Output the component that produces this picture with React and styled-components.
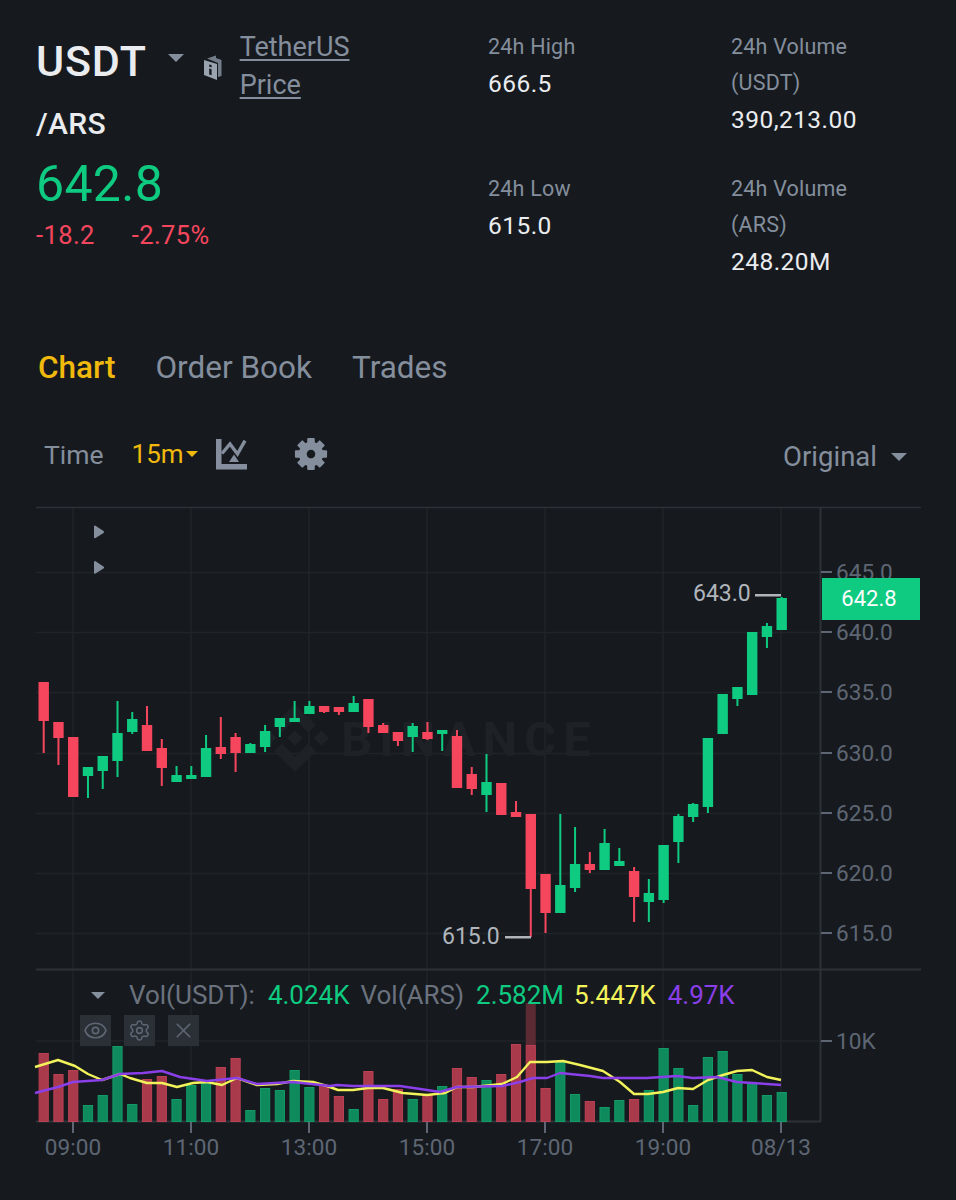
import styled, { createGlobalStyle } from "styled-components";
import { Eye, Settings, X } from "lucide-react";

const GlobalStyle = createGlobalStyle`
	html, body {
		margin: 0;
		background: #161a1f;
	}
	body {
		font-family: Roboto, "Liberation Sans", sans-serif;
	}
`;

const Page = styled.div`
	width: 956px;
	height: 1200px;
	overflow: hidden;
	background: #161a1f;
`;

const Header = styled.header`
	display: grid;
	grid-template-columns: 452px 243px 1fr;
	padding: 29px 0 35px 36px;
`;

const PairRow = styled.div`
	display: flex;
	align-items: flex-start;
`;

const Symbol = styled.h1`
	margin: 12px 0 0;
	font-size: 43px;
	line-height: 40px;
	font-weight: 500;
	letter-spacing: 0.8px;
	color: #eaecef;
`;

const Caret = styled.span`
	width: 0;
	height: 0;
	border-left: ${(p) => p.size}px solid transparent;
	border-right: ${(p) => p.size}px solid transparent;
	border-top: ${(p) => p.size}px solid ${(p) => p.color || "#848e9c"};
`;

const SymbolCaret = styled(Caret)`
	margin: 25px 0 0 21px;
`;

const BookIcon = styled.svg`
	width: 19px;
	height: 26px;
	margin: 26px 17px 0 20px;
	flex: none;
`;

const PriceLink = styled.a`
	width: 125px;
	font-size: 27px;
	line-height: 37.5px;
	color: #848e9c;
	text-decoration: underline;
	text-underline-offset: 3px;
`;

const Quote = styled.div`
	font-size: 30px;
	line-height: 40px;
	font-weight: 500;
	letter-spacing: 0.3px;
	color: #eaecef;
`;

const LastPrice = styled.div`
	margin-top: 8px;
	font-size: 50px;
	line-height: 64px;
	letter-spacing: 0.3px;
	color: #0ecb81;
`;

const Changes = styled.div`
	display: flex;
	gap: 37px;
	margin-top: 3px;
	font-size: 25.5px;
	line-height: 32px;
	letter-spacing: 0.4px;
	color: #f6465d;
`;

const StatColumn = styled.div`
	display: flex;
	flex-direction: column;
`;

const Stat = styled.div`
	height: 142px;
`;

const StatLabel = styled.div`
	font-size: 21.5px;
	line-height: 36px;
	letter-spacing: 0.2px;
	color: #848e9c;
`;

const StatValue = styled.div`
	font-size: 24.5px;
	line-height: 37px;
	letter-spacing: 0.45px;
	color: #eaecef;
`;

const Tabs = styled.nav`
	display: flex;
	gap: 40px;
	padding-left: 38px;
`;

const Tab = styled.span`
	font-size: 31.5px;
	line-height: 40px;
	font-weight: ${(p) => (p.$active ? 500 : 400)};
	color: ${(p) => (p.$active ? "#f0b90b" : "#848e9c")};
`;

const Toolbar = styled.div`
	display: flex;
	align-items: center;
	height: 40px;
	margin: 46px 0 26px;
	padding: 0 49px 0 44px;
`;

const ToolLabel = styled.span`
	font-size: 26.5px;
	color: #848e9c;
`;

const ModeLabel = styled(ToolLabel)`
	font-size: 27.5px;
`;

const Interval = styled.span`
	margin-left: 28px;
	font-size: 26px;
	color: #f0b90b;
`;

const IntervalCaret = styled(Caret)`
	margin-left: 2px;
`;

const ToolIcon = styled.svg`
	flex: none;
	margin-left: ${(p) => p.$gap}px;
`;

const Spacer = styled.span`
	flex: 1;
`;

const ModeCaret = styled(Caret)`
	margin-left: 14px;
`;

const ModeRow = styled.div`
	display: flex;
	align-items: center;
	margin-top: 5px;
`;

const ChartArea = styled.section`
	position: relative;
	width: 956px;
	height: 700px;
`;

const ChartSvg = styled.svg`
	display: block;
	width: 956px;
	height: 700px;

	text {
		font-family: Roboto, "Liberation Sans", sans-serif;
	}
`;

const PriceBadge = styled.div`
	position: absolute;
	left: 822px;
	top: 78px;
	width: 98px;
	height: 42px;
	padding-right: 4px;
	box-sizing: border-box;
	background: #0ecb81;
	color: #fff;
	font-size: 22px;
	line-height: 42px;
	text-align: center;
`;

const Legend = styled.div`
	position: absolute;
	left: 91px;
	top: 480px;
	display: flex;
	align-items: center;
	font-size: 26px;
	line-height: 30px;
	white-space: nowrap;
`;

const LegendCaret = styled(Caret)`
	margin-right: 24px;
`;

const LegendItem = styled.span`
	color: ${(p) => p.color};
	margin-right: ${(p) => p.$gap}px;
`;

const PaneActions = styled.div`
	position: absolute;
	left: 80px;
	top: 515px;
	display: flex;
	gap: 13px;
`;

const PaneButton = styled.div`
	display: flex;
	align-items: center;
	justify-content: center;
	width: 31px;
	height: 31px;
	background: #2b3037;
	color: #5e6673;
`;

const GREEN = "#0ecb81";
const RED = "#f6465d";
const GRID = "#202429";
const AXIS = "#2d3239";
const AXIS_TEXT = "#5e6673";
const LEGEND_TEXT = "#6b727e";

const stepX = 14.76;
const firstX = 43.7;
const xAt = (i) => firstX + stepX * i;

// [color, wick top, body top, body bottom, wick bottom], y in page pixels
const candles = [
	["r", 682, 682, 721, 753],
	["r", 722, 722, 738, 765],
	["r", 737, 737, 797, 797],
	["g", 767, 767, 776, 798],
	["g", 756, 756, 771, 789],
	["g", 701, 733, 761, 777],
	["g", 712, 719, 732, 734],
	["r", 706, 725, 751, 751],
	["r", 739, 748, 768, 786],
	["g", 766, 775, 782, 782],
	["g", 766, 775, 779, 779],
	["g", 735, 748, 777, 777],
	["r", 717, 747, 754, 759],
	["r", 733, 737, 753, 772],
	["g", 743, 744, 753, 753],
	["g", 725, 731, 747, 752],
	["g", 718, 718, 727, 737],
	["g", 701, 718, 722, 722],
	["g", 701, 706, 714, 714],
	["r", 706, 706, 712, 713],
	["r", 707, 707, 712, 715],
	["g", 696, 703, 712, 712],
	["r", 699, 699, 727, 733],
	["r", 723, 725, 733, 733],
	["r", 732, 732, 741, 746],
	["g", 723, 726, 737, 752],
	["r", 722, 732, 739, 740],
	["g", 730, 730, 734, 751],
	["r", 730, 736, 788, 788],
	["r", 767, 774, 789, 795],
	["g", 754, 782, 795, 812],
	["r", 783, 783, 815, 815],
	["r", 801, 812, 817, 817],
	["r", 814, 814, 889, 937],
	["r", 874, 874, 913, 933],
	["g", 814, 885, 913, 913],
	["g", 827, 864, 888, 892],
	["r", 852, 864, 870, 873],
	["g", 829, 843, 870, 870],
	["g", 848, 861, 866, 866],
	["r", 867, 871, 897, 922],
	["g", 879, 893, 902, 922],
	["g", 845, 845, 900, 903],
	["g", 814, 816, 842, 863],
	["g", 803, 804, 817, 822],
	["g", 738, 738, 807, 813],
	["g", 694, 694, 734, 734],
	["g", 687, 687, 699, 706],
	["g", 632, 632, 695, 695],
	["g", 623, 626, 637, 648],
	["g", 597, 598, 630, 630],
];

// [color, top]
const volumes = [
	["r", 1053], ["r", 1074], ["r", 1070], ["g", 1105], ["g", 1095], ["g", 1046], ["g", 1104],
	["r", 1079], ["r", 1076], ["g", 1099], ["g", 1085], ["g", 1083], ["r", 1067], ["r", 1058],
	["g", 1110], ["g", 1088], ["g", 1090], ["g", 1070], ["g", 1087], ["r", 1085], ["r", 1096],
	["g", 1109], ["r", 1071], ["r", 1099], ["r", 1089], ["g", 1099], ["r", 1095], ["g", 1086],
	["r", 1068], ["r", 1077], ["g", 1080], ["r", 1074], ["r", 1044], ["r", 1045], ["r", 1088],
	["g", 1062], ["g", 1094], ["r", 1101], ["g", 1107], ["g", 1100], ["r", 1099], ["g", 1090],
	["g", 1048], ["g", 1068], ["g", 1105], ["g", 1057], ["g", 1051], ["g", 1074], ["g", 1083],
	["g", 1095], ["g", 1092],
];

const yellowLine =
	"35,1067 58,1060 75,1066 88,1074 102,1080 120,1074 130,1078 147,1083 162,1083 177,1087 193,1083 207,1082 222,1085 237,1078 257,1085 277,1084 293,1081 313,1082 327,1086 338,1090 353,1090 368,1088 383,1088 403,1093 427,1095 445,1093 457,1087 473,1087 502,1084 517,1077 530,1062 547,1062 563,1061 580,1065 603,1071 620,1082 634,1094 648,1094 663,1092 678,1088 693,1089 708,1080 723,1075 737,1071 752,1070 767,1077 781,1080";
const purpleLine =
	"35,1093 58,1087 73,1082 102,1080 120,1074 143,1073 162,1071 180,1077 207,1081 237,1078 257,1084 293,1082 330,1086 337,1085 353,1086 400,1086 427,1090 440,1092 457,1087 502,1086 520,1082 533,1078 547,1078 560,1073 590,1076 603,1078 647,1078 677,1076 693,1078 717,1077 737,1082 767,1084 781,1085";

const priceTicks = [
	[572, "645.0"],
	[632, "640.0"],
	[692, "635.0"],
	[753, "630.0"],
	[813, "625.0"],
	[873, "620.0"],
	[933, "615.0"],
];

const timeTicks = [
	[73, "09:00"],
	[191, "11:00"],
	[309, "13:00"],
	[427, "15:00"],
	[545, "17:00"],
	[663, "19:00"],
	[781, "08/13"],
];

const teeth = [0, 45, 90, 135, 180, 225, 270, 315];

const Candle = ({ index, data }) => {
	const [side, wickTop, bodyTop, bodyBottom, wickBottom] = data;
	const x = xAt(index);
	const fill = side === "g" ? GREEN : RED;
	return (
		<g fill={fill}>
			<rect x={x - 1} y={wickTop} width={2} height={wickBottom - wickTop} />
			<rect x={x - 5.2} y={bodyTop} width={10.4} height={bodyBottom - bodyTop} />
		</g>
	);
};

const VolumeBar = ({ index, data }) => {
	const [side, top] = data;
	const x = xAt(index);
	const fill = side === "g" ? "#0f8a5c" : "#a93a4b";
	const edge = side === "g" ? "#129a67" : "#bb4053";
	return (
		<rect x={x - 4.6} y={top + 0.5} width={9.2} height={1121 - top} fill={fill} stroke={edge} strokeWidth={1} />
	);
};

const Chart = () => (
	<ChartSvg viewBox="0 500 956 700">
		{priceTicks.map(([y]) => (
			<line key={y} x1={36} x2={820} y1={y + 0.5} y2={y + 0.5} stroke={GRID} strokeWidth={1.5} />
		))}
		<line x1={36} x2={820} y1={1041} y2={1041} stroke={GRID} strokeWidth={1.5} />
		{timeTicks.map(([x]) => (
			<line key={x} x1={x} x2={x} y1={507} y2={1121} stroke={GRID} strokeWidth={1.5} />
		))}
		<line x1={36} x2={921} y1={507.5} y2={507.5} stroke={AXIS} strokeWidth={1.5} />
		<line x1={36} x2={921} y1={969.5} y2={969.5} stroke={AXIS} strokeWidth={2} />
		<line x1={36} x2={821} y1={1121.5} y2={1121.5} stroke={AXIS} strokeWidth={2} />
		<line x1={820.5} x2={820.5} y1={507} y2={1122} stroke={AXIS} strokeWidth={2} />

		{/* watermark */}
		<g fill="#1e2227">
			<path
				transform="translate(261 704) scale(0.537)"
				d="M38.73 53.2l24.59-24.58 24.6 24.6 14.3-14.31L63.32 0 24.43 38.9zM0 63.31l14.3-14.31 14.31 14.31-14.31 14.3zM38.73 73.41l24.59 24.59 24.6-24.6 14.31 14.29-38.9 38.91-38.91-38.88zM98 63.31l14.3-14.31 14.31 14.3-14.31 14.32zM77.83 63.3L63.32 48.78 52.59 59.51l-1.24 1.23-2.54 2.54 14.51 14.5 14.51-14.47z"
			/>
			<text x={341} y={756} fontSize={49} fontWeight={700} letterSpacing={7}>
				BINANCE
			</text>
		</g>

		<path d="M94 526.5q0-1.5 1.5-.8l8 5.2q1.5 1 0 2l-8 5.2q-1.5.8-1.5-.8zM94 562q0-1.5 1.5-.8l8 5.2q1.5 1 0 2l-8 5.2q-1.5.8-1.5-.8z" fill="#848e9c" />

		{candles.map((c, i) => (
			<Candle key={i} index={i} data={c} />
		))}

		{volumes.map((v, i) => (
			<VolumeBar key={i} index={i} data={v} />
		))}
		<rect x={xAt(33) - 5} y={1003} width={10} height={42} fill="#5c2a33" />
		<polyline points={yellowLine} fill="none" stroke="#f2f25a" strokeWidth={2.4} strokeLinejoin="round" />
		<polyline points={purpleLine} fill="none" stroke="#8a3fe8" strokeWidth={2.4} strokeLinejoin="round" />

		<g fill="#b0b5bc" fontSize={23}>
			<text x={693} y={601}>643.0</text>
			<rect x={755} y={594} width={26} height={2.5} />
			<text x={442} y={944}>615.0</text>
			<rect x={505} y={936} width={26} height={2.5} />
		</g>

		<g fill={AXIS_TEXT} fontSize={22.6}>
			{priceTicks.map(([y, label]) => (
				<g key={label}>
					<rect x={821} y={y - 1} width={11} height={2} />
					<text x={836} y={y + 8}>{label}</text>
				</g>
			))}
			<rect x={821} y={1040} width={11} height={2} />
			<text x={836} y={1049}>10K</text>
			{timeTicks.map(([x, label]) => (
				<g key={label}>
					<rect x={x - 1} y={1122} width={2} height={11} />
					<text x={x} y={1155} textAnchor="middle">{label}</text>
				</g>
			))}
		</g>
	</ChartSvg>
);

export default function App() {
	return (
		<Page>
			<GlobalStyle />
			<Header>
				<div>
					<PairRow>
						<Symbol>USDT</Symbol>
						<SymbolCaret size={8} />
						<BookIcon viewBox="0 0 19 26">
							<path d="M3 3.5L12 .5V3l5.5 2v16L14 22V8z" fill="#737c89" />
							<path d="M0 5l13 4v16L0 20z" fill="#9aa3b0" />
							<path d="M5.2 9.4l2.4.7v2.4l-2.4-.7zM5.2 13.6l2.4.7v6l-2.4-.7z" fill="#161a1f" />
						</BookIcon>
						<PriceLink>TetherUS Price</PriceLink>
					</PairRow>
					<Quote>/ARS</Quote>
					<LastPrice>642.8</LastPrice>
					<Changes>
						<span>-18.2</span>
						<span>-2.75%</span>
					</Changes>
				</div>
				<StatColumn>
					<Stat>
						<StatLabel>24h High</StatLabel>
						<StatValue>666.5</StatValue>
					</Stat>
					<Stat>
						<StatLabel>24h Low</StatLabel>
						<StatValue>615.0</StatValue>
					</Stat>
				</StatColumn>
				<StatColumn>
					<Stat>
						<StatLabel>24h Volume</StatLabel>
						<StatLabel>(USDT)</StatLabel>
						<StatValue>390,213.00</StatValue>
					</Stat>
					<Stat>
						<StatLabel>24h Volume</StatLabel>
						<StatLabel>(ARS)</StatLabel>
						<StatValue>248.20M</StatValue>
					</Stat>
				</StatColumn>
			</Header>

			<Tabs>
				<Tab $active>Chart</Tab>
				<Tab>Order Book</Tab>
				<Tab>Trades</Tab>
			</Tabs>

			<Toolbar>
				<ToolLabel>Time</ToolLabel>
				<Interval>15m</Interval>
				<IntervalCaret size={6} color="#f0b90b" />
				<ToolIcon $gap={18} width={31} height={31} viewBox="0 0 31 31">
					<path d="M0 0h5.5v25H31v5.5H0z" fill="#848e9c" />
					<path d="M6 14.5L14 5l7.5 10L29 1.7" fill="none" stroke="#848e9c" strokeWidth={3.4} />
					<path d="M13 23l5-7.5 5 7.5z" fill="#848e9c" />
				</ToolIcon>
				<ToolIcon $gap={47} width={34} height={34} viewBox="0 0 36 36">
					<g fill="#848e9c">
						{teeth.map((a) => (
							<rect key={a} x={14} y={1} width={8} height={8} rx={1} transform={`rotate(${a} 18 18)`} />
						))}
						<path fillRule="evenodd" d="M18 5a13 13 0 1 0 .01 0zM18 13.5a4.5 4.5 0 1 1-.01 0z" />
					</g>
				</ToolIcon>
				<Spacer />
				<ModeRow>
					<ModeLabel>Original</ModeLabel>
					<ModeCaret size={8} />
				</ModeRow>
			</Toolbar>

			<ChartArea>
				<Chart />
				<PriceBadge>642.8</PriceBadge>
				<Legend>
					<LegendCaret size={7} />
					<LegendItem color={LEGEND_TEXT} $gap={13}>Vol(USDT):</LegendItem>
					<LegendItem color="#0ecb81" $gap={11}>4.024K</LegendItem>
					<LegendItem color={LEGEND_TEXT} $gap={12}>Vol(ARS)</LegendItem>
					<LegendItem color="#0ecb81" $gap={10}>2.582M</LegendItem>
					<LegendItem color="#f2f25a" $gap={12}>5.447K</LegendItem>
					<LegendItem color="#8a3fe8" $gap={0}>4.97K</LegendItem>
				</Legend>
				<PaneActions>
					<PaneButton>
						<Eye size={25} strokeWidth={1.6} />
					</PaneButton>
					<PaneButton>
						<Settings size={23} strokeWidth={1.6} />
					</PaneButton>
					<PaneButton>
						<X size={25} strokeWidth={1.6} />
					</PaneButton>
				</PaneActions>
			</ChartArea>
		</Page>
	);
}
